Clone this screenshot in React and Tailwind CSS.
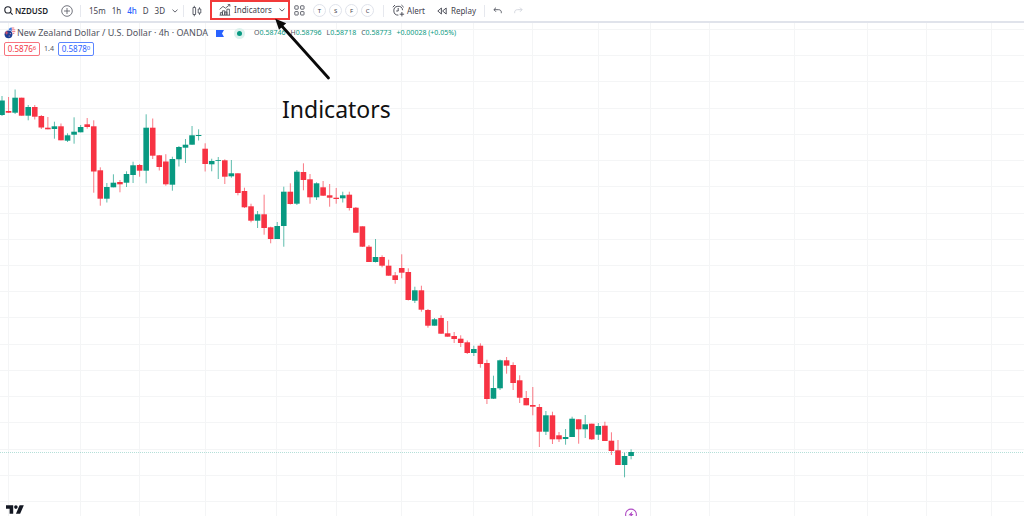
import React from "react";
import clsx from "clsx";

const UP = "#089981";
const DOWN = "#f73343";

// the toolbar sits above the chart, candle values are measured from the window top
const TOOLBAR_HEIGHT = 23;
const FIRST_X = 2;
const STEP = 6.553;

// [direction, high, body top, body bottom, low]
const candles = [
  ["u", 96, 100.5, 115, 116],
  ["d", 97, 111, 112.7, 113],
  ["u", 89.5, 97.7, 112.7, 114],
  ["d", 97.7, 97.7, 115.7, 115.7],
  ["u", 105, 107, 115.7, 120.3],
  ["d", 105, 107, 116.7, 119.5],
  ["d", 115, 116, 127.5, 129],
  ["d", 117, 127.7, 129.3, 129.3],
  ["u", 121.7, 126.3, 129, 138.7],
  ["d", 123.5, 126.3, 140.3, 140.3],
  ["u", 133.3, 135.3, 140.7, 142],
  ["u", 117.3, 131.7, 134.7, 143.7],
  ["u", 125, 127, 132.3, 132.3],
  ["d", 118, 124.3, 127, 128.7],
  ["d", 120.3, 126.3, 171.5, 192.7],
  ["d", 167.3, 170.3, 198.7, 205.7],
  ["u", 183, 187, 198.7, 202.5],
  ["u", 174.3, 182.7, 187.3, 187.3],
  ["d", 180, 182, 184.3, 192.3],
  ["u", 171.3, 174, 182.7, 187],
  ["u", 161.7, 165.3, 175, 183],
  ["d", 164, 165, 170.7, 176.7],
  ["u", 114.3, 127.7, 170.7, 183.3],
  ["d", 118.5, 127.7, 155.7, 159],
  ["d", 155, 155.3, 167, 170.5],
  ["d", 154.2, 161.5, 184.3, 185.7],
  ["u", 156.7, 159, 184.7, 190.7],
  ["u", 146, 147, 159.3, 166.5],
  ["u", 139, 144.7, 147.7, 163],
  ["u", 126, 135.3, 144.7, 144.7],
  ["u", 129.3, 135, 136, 140.5],
  ["d", 143.3, 148.7, 164, 171.5],
  ["u", 158.7, 161, 164.3, 171.3],
  ["u", 157, 160.2, 161, 179],
  ["d", 159.3, 160.3, 176.7, 184],
  ["u", 160, 173.3, 176.3, 177.7],
  ["d", 173.3, 173.3, 193, 195.3],
  ["d", 187.7, 191, 207.3, 208],
  ["d", 203.7, 206.3, 220.7, 222.3],
  ["u", 211, 214.3, 220.7, 228],
  ["d", 194.7, 214.3, 228, 234.7],
  ["d", 226.7, 227.3, 239, 243.3],
  ["u", 222, 226, 239, 239],
  ["u", 186.7, 191.7, 226, 246.7],
  ["d", 183.3, 191.7, 204, 204.5],
  ["u", 170, 171.7, 203.7, 205],
  ["d", 163.3, 172, 180, 190.3],
  ["d", 174, 179.3, 197.3, 203.7],
  ["u", 182.3, 183.3, 197.3, 200],
  ["d", 181, 187.3, 195.7, 196],
  ["d", 184, 195.3, 197.7, 206.7],
  ["d", 188, 197.7, 199, 203.7],
  ["u", 191.7, 195.3, 198.3, 202.5],
  ["d", 191.7, 194.7, 208, 210.5],
  ["d", 207, 207.7, 232.7, 233],
  ["d", 226.3, 226.3, 246.7, 247],
  ["d", 245, 246.7, 262, 262],
  ["u", 239, 257, 262, 262.5],
  ["d", 255.3, 257, 265.7, 267.3],
  ["d", 259.7, 265.7, 275.7, 275.7],
  ["d", 272, 275.3, 280, 283.7],
  ["d", 254.3, 268, 272.7, 278.3],
  ["d", 268.3, 272, 300, 300.5],
  ["u", 286.7, 290.3, 300.7, 303],
  ["d", 285.7, 290.3, 309.7, 311.7],
  ["d", 309, 310, 325.7, 327.7],
  ["u", 318, 319.3, 325.7, 325.7],
  ["d", 315.3, 318, 333.7, 334],
  ["d", 321, 333.3, 336.7, 336.7],
  ["d", 332, 336, 339, 343],
  ["d", 335.3, 338.7, 343, 347],
  ["d", 340.5, 342.3, 353, 354],
  ["u", 345.7, 349, 353, 356],
  ["d", 343.3, 345.7, 364, 367.7],
  ["d", 359.7, 363, 399, 404],
  ["u", 375.7, 388, 398.7, 399],
  ["u", 359.5, 360.3, 388.3, 390],
  ["d", 357, 360.3, 365.7, 373.7],
  ["d", 362.3, 365, 383, 390],
  ["d", 375.3, 380.3, 397.7, 403],
  ["d", 391, 398, 405.3, 405.3],
  ["d", 387, 405, 406.7, 415.3],
  ["d", 404, 407, 431.7, 447],
  ["u", 411, 415.3, 431.7, 435],
  ["d", 411.7, 415.3, 439.3, 444],
  ["d", 432, 435.3, 439.3, 442],
  ["u", 429, 437, 439, 444.7],
  ["u", 416.7, 418.7, 437, 437],
  ["d", 419.3, 419.3, 429.3, 443.7],
  ["u", 415, 424.3, 429.3, 438],
  ["d", 423.7, 423.7, 439.3, 440],
  ["u", 423, 426, 434.7, 440],
  ["d", 421.7, 425.7, 441, 441],
  ["d", 432.3, 440.7, 451, 455],
  ["d", 440, 450.3, 465, 465],
  ["u", 452.7, 456, 465, 477.3],
  ["u", 449.3, 452, 456, 459.3],
];

const gridX = [8, 80, 139, 205, 276, 336, 401, 473, 532, 598, 650, 709, 794, 867, 926, 991];
const gridY = Array.from({ length: 19 }, (_, i) => Math.round(29 + i * 26.22));

const intervals = ["15m", "1h", "4h", "D", "3D"];
const favorites = ["T", "S", "F", "C"];
const ohlc = [
  ["O", "0.58746"],
  ["H", "0.58796"],
  ["L", "0.58718"],
  ["C", "0.58773"],
];

function Divider() {
  return <span className="h-3 w-px shrink-0 bg-[#e6e8ee]" />;
}

function Chevron() {
  return (
    <svg width="6" height="4" viewBox="0 0 6 4" fill="none" stroke="#50535e" strokeWidth="0.9">
      <path d="M0.5 0.7 3 3.1 5.5 0.7" />
    </svg>
  );
}

function SearchIcon() {
  return (
    <svg width="9" height="9" viewBox="0 0 9 9" fill="none" stroke="#1c1f29" strokeWidth="1.1">
      <circle cx="3.9" cy="3.9" r="3.1" />
      <path d="M6.2 6.2 8.6 8.6" />
    </svg>
  );
}

function PlusCircleIcon() {
  return (
    <svg width="12" height="12" viewBox="0 0 12 12" fill="none" stroke="#50535e" strokeWidth="0.8">
      <circle cx="6" cy="6" r="5.3" />
      <path d="M6 3v6M3 6h6" />
    </svg>
  );
}

function CandlesIcon() {
  return (
    <svg width="10" height="12" viewBox="0 0 10 12" fill="none" stroke="#50535e" strokeWidth="0.9">
      <path d="M1 2.5h2.6v7H1zM2.3 0.8v1.7M2.3 9.5v1.8M6.2 4h2.6v4H6.2zM7.5 2.3V4M7.5 8v1.8" />
    </svg>
  );
}

function IndicatorsIcon() {
  return (
    <svg width="12" height="12" viewBox="0 0 12 12" fill="none" stroke="#3f424d" strokeWidth="0.8">
      <path d="M0.6 5.4 4 2.4l2.4 1.8L10.8 0.7M8.7 0.6h2.2v2" />
      <path d="M1.4 11V8.6h2V11M3.4 11V6.8h2.4V11M5.8 11V8h2.1v3M7.9 11V5.2h2.5V11M0.6 11.2h10.6" />
    </svg>
  );
}

function LayoutIcon() {
  return (
    <svg width="11" height="11" viewBox="0 0 11 11" fill="none" stroke="#50535e" strokeWidth="0.9">
      <rect x="0.8" y="0.8" width="3.4" height="3.4" rx="0.5" />
      <rect x="6.6" y="0.8" width="3.4" height="3.4" rx="0.5" />
      <rect x="0.8" y="6.6" width="3.4" height="3.4" rx="0.5" />
      <rect x="6.6" y="6.6" width="3.4" height="3.4" rx="0.5" />
    </svg>
  );
}

function AlertIcon() {
  return (
    <svg width="13" height="13" viewBox="0 0 13 13" fill="none" stroke="#3f424d" strokeWidth="0.9">
      <path d="M10.6 6.2a4.4 4.4 0 1 0-4.2 4.9" />
      <path d="M6.2 4v3h-2M0.8 3.2 3 1M9.4 1l2.3 2.2M9.9 8v4.4M7.7 10.2h4.4" />
    </svg>
  );
}

function ReplayIcon() {
  return (
    <svg width="10" height="8" viewBox="0 0 10 8" fill="none" stroke="#3f424d" strokeWidth="0.9" strokeLinejoin="round">
      <path d="M4.4 1v6L0.8 4zM9.2 1v6L5.6 4z" />
    </svg>
  );
}

function UndoIcon({ flipped }) {
  return (
    <svg
      width="9"
      height="7"
      viewBox="0 0 9 7"
      fill="none"
      stroke={flipped ? "#cfd2da" : "#50535e"}
      strokeWidth="0.9"
      className={clsx(flipped && "-scale-x-100")}
    >
      <path d="M3 0.6 0.9 2.7 3 4.8M1 2.7h4.6c1.7 0 2.7 1 2.7 2.5v1" />
    </svg>
  );
}

function PairIcon() {
  return (
    <svg width="12" height="12" viewBox="0 0 12 12">
      <circle cx="7.8" cy="4" r="3.6" fill="#fff" />
      <path d="M5 1.8A3.6 3.6 0 0 1 7.8 0.4V4H4.2z" fill="#3f7be0" />
      <path d="M7.8 1h2.4M7.8 2.8h3.4M7.8 4.6h3.5M7.8 6.4h2.5" stroke="#e5566a" strokeWidth="0.8" />
      <circle cx="4.5" cy="7.3" r="4.4" fill="#fff" />
      <circle cx="4.5" cy="7.3" r="3.9" fill="#1d3f94" />
      <path d="M0.9 5.9h3.4M2.7 3.9v3.6" stroke="#e5566a" strokeWidth="0.9" />
      <circle cx="6.3" cy="6.6" r="0.6" fill="#f5b3bd" />
      <circle cx="5.2" cy="9" r="0.6" fill="#f5b3bd" />
    </svg>
  );
}

function Toolbar() {
  return (
    <header className="flex h-[23px] shrink-0 items-center border-b-2 border-[#e0e3eb] pl-1 text-[8px] leading-3 text-[#3f424d]">
      <button className="flex w-14 items-center gap-[2px] font-semibold text-[#1c1f29]">
        <SearchIcon />
        NZDUSD
      </button>
      <button aria-label="Compare symbol" className="mr-[7px] ml-px">
        <PlusCircleIcon />
      </button>
      <Divider />
      <nav className="flex items-center gap-[6px] pr-[5px] pl-2">
        {intervals.map((item) => (
          <button key={item} className={clsx(item === "4h" && "font-medium text-[#2962ff]")}>
            {item}
          </button>
        ))}
        <button aria-label="More intervals" className="ml-px">
          <Chevron />
        </button>
      </nav>
      <Divider />
      <button aria-label="Chart type" className="mx-2">
        <CandlesIcon />
      </button>
      <div className="flex h-5 w-20 items-center justify-between self-start border-2 border-[#f23a3a] pr-[3px] pl-[7px]">
        <button className="flex items-center gap-[3px]">
          <IndicatorsIcon />
          Indicators
        </button>
        <button aria-label="Favorite indicators">
          <Chevron />
        </button>
      </div>
      <button aria-label="Indicator templates" className="mr-2 ml-1">
        <LayoutIcon />
      </button>
      <div className="flex items-center gap-[3px] pr-[9px]">
        {favorites.map((item) => (
          <button
            key={item}
            className="flex size-[13px] items-center justify-center rounded-full border border-[#e0e3eb] text-[6px] leading-none"
          >
            {item}
          </button>
        ))}
      </div>
      <Divider />
      <button className="mr-3 ml-2 flex items-center gap-[2px]">
        <AlertIcon />
        Alert
      </button>
      <button className="mr-2 flex items-center gap-1">
        <ReplayIcon />
        Replay
      </button>
      <Divider />
      <button aria-label="Undo" className="mr-3 ml-2">
        <UndoIcon />
      </button>
      <button aria-label="Redo">
        <UndoIcon flipped />
      </button>
    </header>
  );
}

function Legend() {
  return (
    <div className="relative flex flex-col items-start gap-[3px] pt-1 pl-1">
      <div className="flex h-3 items-center text-[#50535e]">
        <PairIcon />
        <h1 className="ml-px text-[9px] leading-3 whitespace-nowrap">New Zealand Dollar / U.S. Dollar · 4h · OANDA</h1>
        <svg width="8" height="7" viewBox="0 0 8 7" className="ml-2">
          <path d="M0 0h8L6 3.5 8 7H0z" fill="#2962ff" />
        </svg>
        <span className="ml-[10px] flex size-[11px] items-center justify-center rounded-full bg-[#dcf1ed]">
          <span className="size-[5px] rounded-full bg-[#089981]" />
        </span>
        <p className="ml-[9px] flex gap-[5px] text-[7px] leading-3 whitespace-nowrap text-[#089981]">
          {ohlc.map(([label, value]) => (
            <span key={label}>
              <span className="text-[#50535e]">{label}</span>
              {value}
            </span>
          ))}
          <span>+0.00028 (+0.05%)</span>
        </p>
      </div>
      <div className="flex items-center text-[8px] leading-3">
        <button className="flex h-[14px] w-9 items-center justify-center rounded-xs border border-[#f7747e] bg-white text-[#f23645]">
          0.5876<span className="pb-[2px] text-[6px]">6</span>
        </button>
        <span className="w-[18px] text-center text-[7px] text-[#50535e]">1.4</span>
        <button className="flex h-[14px] w-9 items-center justify-center rounded-xs border border-[#5c86ff] bg-white text-[#2962ff]">
          0.5878<span className="pb-[2px] text-[6px]">0</span>
        </button>
      </div>
    </div>
  );
}

function CandleChart() {
  return (
    <svg className="absolute inset-0 size-full" role="img" aria-label="NZDUSD 4h candles">
      <g transform={`translate(0 ${-TOOLBAR_HEIGHT})`}>
        {gridX.map((x) => (
          <rect key={x} x={x} y="23" width="1" height="100%" fill="#f4f5f6" />
        ))}
        {gridY.map((y) => (
          <rect key={y} x="0" y={y} width="100%" height="1" fill="#f4f5f6" />
        ))}
        <line x1="0" x2="100%" y1="452.5" y2="452.5" stroke={UP} strokeOpacity="0.3" strokeDasharray="1 1" />
        {candles.map(([dir, high, top, bottom, low], i) => {
          const x = FIRST_X + i * STEP;
          const color = dir === "u" ? UP : DOWN;
          return (
            <g key={i} fill={color}>
              <rect x={x - 0.5} y={high} width="1" height={low - high} fillOpacity="0.65" />
              <rect x={x - 2.8} y={top} width="5.6" height={Math.max(bottom - top, 0.8)} />
            </g>
          );
        })}
        <g transform="translate(631 514.5)">
          <circle r="5.4" fill="#fff" stroke="#b04cc4" strokeWidth="1.1" />
          <path d="M1.4-3.2-2.6 0.8h2.2L-1.2 3.4 2.6-0.4H0.6z" fill="#b04cc4" />
        </g>
      </g>
    </svg>
  );
}

function Logo() {
  return (
    <svg width="18" height="9" viewBox="0 0 18 9" fill="#131722" className="absolute bottom-[2px] left-[6px]">
      <path d="M0 0.3h7.2v8.4H3.6V3.8H0z" />
      <circle cx="9.9" cy="2.1" r="1.8" />
      <path d="M13.6 0.3h4.2l-3.7 8.4H9.9z" />
    </svg>
  );
}

// callout that points at the Indicators button
function Callout() {
  return (
    <div className="pointer-events-none absolute top-[18px] left-[274px]">
      <svg width="58" height="62" viewBox="0 0 58 62">
        <path d="M54.5 60 6 6" stroke="#0a0a0a" strokeWidth="2.8" strokeLinecap="round" />
        <path d="M1.2 0.8 12.2 5.2 5 11.8z" fill="#0a0a0a" />
      </svg>
      <p className="ml-2 pt-[13px] text-[23px] leading-8 text-[#111]">Indicators</p>
    </div>
  );
}

export default function App() {
  return (
    <div className="relative flex min-h-screen flex-col overflow-hidden bg-white font-['Noto_Sans','Open_Sans',sans-serif]">
      <Toolbar />
      <main className="relative flex-1">
        <CandleChart />
        <Legend />
        <Logo />
      </main>
      <Callout />
    </div>
  );
}
